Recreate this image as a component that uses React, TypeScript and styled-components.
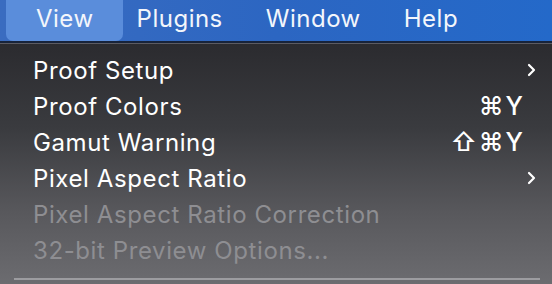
import styled, { createGlobalStyle } from 'styled-components'

const GlobalStyle = createGlobalStyle`
  html, body {
    margin: 0;
    padding: 0;
    width: 552px;
    height: 284px;
    overflow: hidden;
    background: #2b2b2f;
  }
  body {
    font-family: Inter, "Liberation Sans", sans-serif;
    -webkit-font-smoothing: antialiased;
  }
`

type Item = {
  label: string
  shortcut?: string
  submenu?: boolean
  disabled?: boolean
}

const barItems = ['View', 'Plugins', 'Window', 'Help']

const items: Item[] = [
  { label: 'Proof Setup', submenu: true },
  { label: 'Proof Colors', shortcut: '⌘Y' },
  { label: 'Gamut Warning', shortcut: '⇧⌘Y' },
  { label: 'Pixel Aspect Ratio', submenu: true },
  { label: 'Pixel Aspect Ratio Correction', disabled: true },
  { label: '32-bit Preview Options...', disabled: true },
]

const Chevron = () => (
  <svg width="9" height="14" viewBox="0 0 9 14">
    <path d="M2 2 L7 7 L2 12" fill="none" stroke="#fff" strokeWidth="2.2" strokeLinecap="round" strokeLinejoin="round" />
  </svg>
)

const App = () => {
  return (
    <>
      <GlobalStyle />
      <Screen>
        <MenuBar>
          {barItems.map((name, i) => (
            <BarItem key={name} $active={i === 0}>
              {name}
            </BarItem>
          ))}
        </MenuBar>
        <Menu>
          {items.map((it) => (
            <Row key={it.label} $disabled={!!it.disabled}>
              <Label>{it.label}</Label>
              {it.shortcut && (
                <Shortcut>
                  {it.shortcut.split('').map((c, i) => (
                    <span key={i}>{c}</span>
                  ))}
                </Shortcut>
              )}
              {it.submenu && <Chevron />}
            </Row>
          ))}
          <Separator />
        </Menu>
      </Screen>
    </>
  )
}

export default App

const Screen = styled.div`
  width: 552px;
  height: 284px;
  display: flex;
  flex-direction: column;
`

const MenuBar = styled.div`
  height: 41px;
  display: flex;
  align-items: stretch;
  gap: 43px;
  padding-left: 36px;
  background: linear-gradient(90deg, #3a6cc0 0%, #2c66c2 50%, #2469c9 100%);
  border-bottom: 2px solid #17233a;
  box-shadow: 0 1px 0 #5b5b62;
`

const BarItem = styled.div<{ $active: boolean }>`
  position: relative;
  z-index: 0;
  display: flex;
  align-items: center;
  padding-bottom: 4px;
  font-size: 24px;
  letter-spacing: 0.5px;
  color: #f3f6fb;

  &::before {
    content: '';
    display: ${({ $active }) => ($active ? 'block' : 'none')};
    position: absolute;
    top: 0;
    bottom: 0;
    left: -30px;
    right: -29px;
    border-radius: 0 0 7px 7px;
    background: #5a8ddb;
    z-index: -1;
  }
`

const Menu = styled.div`
  flex: 1;
  margin-top: 1px;
  padding: 8px 0 0 33px;
  display: flex;
  flex-direction: column;
  background: linear-gradient(180deg, #2b2b2f 0%, #3a3b3f 35%, #58585c 70%, #6c6c70 100%);
`

const Row = styled.div<{ $disabled: boolean }>`
  height: 36px;
  display: flex;
  align-items: center;
  padding-right: 16px;
  font-size: 24px;
  letter-spacing: 0.6px;
  color: ${({ $disabled }) => ($disabled ? '#8e8e92' : '#ffffff')};
`

const Label = styled.span`
  flex: 1;
`

const Shortcut = styled.span`
  display: flex;
  gap: 2px;
  margin-right: 13px;
  font-size: 25px;
  font-weight: 500;
  letter-spacing: 0;
`

const Separator = styled.div`
  margin: 10px 12px 0 -19px;
  height: 2px;
  background: #9c9ca0;
`
